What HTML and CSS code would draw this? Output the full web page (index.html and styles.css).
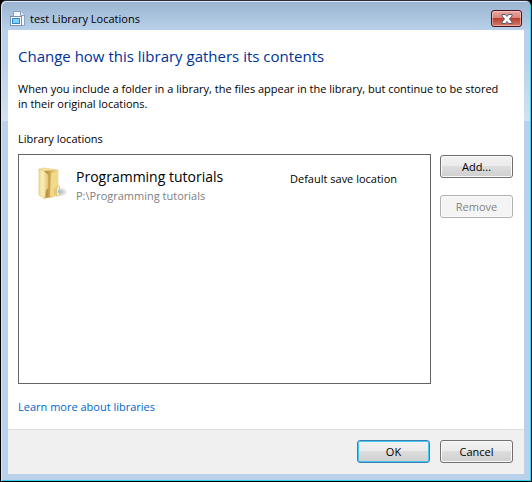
FILE: index.html
```
<!DOCTYPE html>
<html lang="en">
<head>
    <meta charset="UTF-8">
    <meta name="viewport" content="width=device-width, initial-scale=1.0">
    <title>test Library Locations</title>
    <link rel="stylesheet" href="styles.css">
</head>
<body>
    <div class="window">
        <header class="titlebar">
            <svg class="title-icon" width="16" height="16" viewBox="0 0 16 16" aria-hidden="true">
                <path d="M3.500 .5H11l3.500 3.500V14.500H3.500z" fill="#f4f8fc" stroke="#8ba3bd"/>
                <path d="M10.500 .5V4.500h4" fill="#dce8f4" stroke="#8ba3bd"/>
                <rect x=".5" y="5.500" width="11" height="9" fill="#fff" stroke="#7893b0"/>
                <rect x="2.500" y="7.500" width="7" height="5" fill="#7fd0fa" stroke="#3486c8"/>
            </svg>
            <span class="title">test Library Locations</span>
            <button class="close" type="button" aria-label="Close">
                <svg width="12" height="10" viewBox="0 0 12 10" aria-hidden="true">
                    <path d="M1 .5h3.500L6 2.500 7.500 .5H11V2L8.500 5 11 8v1.500H7.500L6 7.500 4.500 9.500H1V8l2.500-3L1 2z" fill="#fff" stroke="#565b68"/>
                </svg>
            </button>
        </header>

        <main class="content">
            <h1>Change how this library gathers its contents</h1>
            <p class="intro">When you include a folder in a library, the files appear in the library, but continue to be stored in their original locations.</p>

            <h2 id="locationsLabel">Library locations</h2>
            <div class="locations">
                <ul class="list" aria-labelledby="locationsLabel">
                    <li class="location">
                        <svg class="folder" width="36" height="36" viewBox="0 0 36 36" aria-hidden="true">
                            <defs>
                                <linearGradient id="front" x2="1">
                                    <stop offset="0" stop-color="#f3dc90"/>
                                    <stop offset=".4" stop-color="#fbeeb8"/>
                                    <stop offset="1" stop-color="#e6c876"/>
                                </linearGradient>
                                <linearGradient id="inside" x2="1">
                                    <stop offset="0" stop-color="#a97e34"/>
                                    <stop offset=".4" stop-color="#cfa957"/>
                                    <stop offset="1" stop-color="#f3dd94"/>
                                </linearGradient>
                                <radialGradient id="shadow">
                                    <stop offset="0" stop-color="#666" stop-opacity=".6"/>
                                    <stop offset="1" stop-color="#666" stop-opacity="0"/>
                                </radialGradient>
                            </defs>
                            <ellipse cx="23" cy="26" rx="10" ry="5" fill="url(#shadow)"/>
                            <path d="M4 3l5-1 14 2v25l-6 2-8 1z" fill="#f5e19a" stroke="#e5ca7e" stroke-width=".6"/>
                            <path d="M9 5l13-1v17l2 6-7 4-7 1z" fill="url(#inside)"/>
                            <path d="M16 7l6-2v16l-3 2v7l-4 1z" fill="#f1d88b"/>
                            <path d="M4 3l5 2 4 4v13l-2 2-1 9-6-4z" fill="url(#front)" stroke="#e0bf6c" stroke-width=".6"/>
                            <path d="M22 20h2.500v9l-3 1z" fill="#fff3c4" stroke="#d9b75f" stroke-width=".7"/>
                            <path d="M23.500 24v3" stroke="#8fc3e6"/>
                        </svg>
                        <div class="details">
                            <div class="name">Programming tutorials</div>
                            <div class="path">P:\Programming tutorials</div>
                        </div>
                        <div class="status">Default save location</div>
                    </li>
                </ul>
                <div class="side-buttons">
                    <button class="btn" type="button">Add...</button>
                    <button class="btn" type="button" disabled>Remove</button>
                </div>
            </div>

            <a class="learn" href="#">Learn more about libraries</a>
        </main>

        <footer class="footer">
            <button class="btn btn-default" type="button">OK</button>
            <button class="btn" type="button">Cancel</button>
        </footer>
    </div>
</body>
</html>
```
FILE: styles.css
```
* {
    box-sizing: border-box;
}
body {
    margin: 0;
    background: #000;
    color: #000;
    font: 11px/15px "Open Sans", "Noto Sans", sans-serif;
}
button {
    font: inherit;
    color: inherit;
}
.window {
    display: flex;
    flex-direction: column;
    min-height: 100vh;
    padding: 0 6px 7px;
    border: 1px solid #000;
    border-top-color: #2b2f38;
    border-radius: 6px 6px 0 0;
    background: linear-gradient(#9ab3d0, #b9d1ea 30px, #b9d1ea 60px, #d3e2f3 120px, #b9d1ea 120px);
    box-shadow: inset 1px 1px #d8e8f5, inset -1px -1px #35d0ee;
}
.titlebar {
    display: flex;
    align-items: center;
    height: 29px;
    padding: 6px 3px 0;
}
.title {
    flex: 1;
    margin-left: 4px;
}
.close {
    display: flex;
    align-items: center;
    justify-content: center;
    width: 31px;
    height: 17px;
    padding: 0;
    border: 1px solid #4c1220;
    border-radius: 3px;
    background: linear-gradient(#e8a9a4, #d98279 48%, #b9402f 50%, #d27b6a);
    box-shadow: inset 0 0 0 1px rgba(255, 220, 215, 0.5);
}
.content {
    display: flex;
    flex: 1;
    flex-direction: column;
    margin: 0 1px;
    padding: 14px 11px 15px 10px;
    background: #fff;
}
h1 {
    margin: 0;
    color: #003399;
    font-size: 15px;
    font-weight: 400;
    line-height: 24px;
}
.intro {
    margin: 13px 0 0;
    padding-right: 8px;
}
h2 {
    margin: 20px 0 0;
    font-size: 11px;
    font-weight: 400;
}
.locations {
    display: flex;
    flex: 1;
    gap: 9px;
    margin-top: 8px;
}
.list {
    flex: 1;
    margin: 0;
    padding: 11px 16px;
    border: 1px solid #646464;
    list-style: none;
}
.location {
    display: flex;
}
.details {
    flex: 1;
    margin-left: 5px;
}
.name {
    font-size: 14px;
    line-height: 22px;
}
.path {
    color: #808080;
}
.status {
    width: 124px;
    padding-top: 5px;
}
.side-buttons {
    display: flex;
    flex-direction: column;
    gap: 17px;
    padding-top: 1px;
}
.btn {
    width: 73px;
    height: 23px;
    padding: 0;
    border: 1px solid #707070;
    border-radius: 3px;
    background: linear-gradient(#f2f2f2, #ebebeb 48%, #dddddd 50%, #cfcfcf);
    box-shadow: inset 0 0 0 1px #fafafa;
}
.btn:disabled {
    border-color: #adb2b5;
    background: #f4f4f4;
    color: #838383;
}
.btn-default {
    border-color: #3c7fb1;
    box-shadow: inset 0 0 0 1px #45c8f0;
}
.learn {
    align-self: flex-start;
    margin-top: 15px;
    color: #0066cc;
    text-decoration: none;
}
.footer {
    display: flex;
    justify-content: flex-end;
    gap: 10px;
    margin: 0 1px;
    padding: 10px 11px 11px;
    border-top: 1px solid #dfdfdf;
    background: #f0f0f0;
}
```
